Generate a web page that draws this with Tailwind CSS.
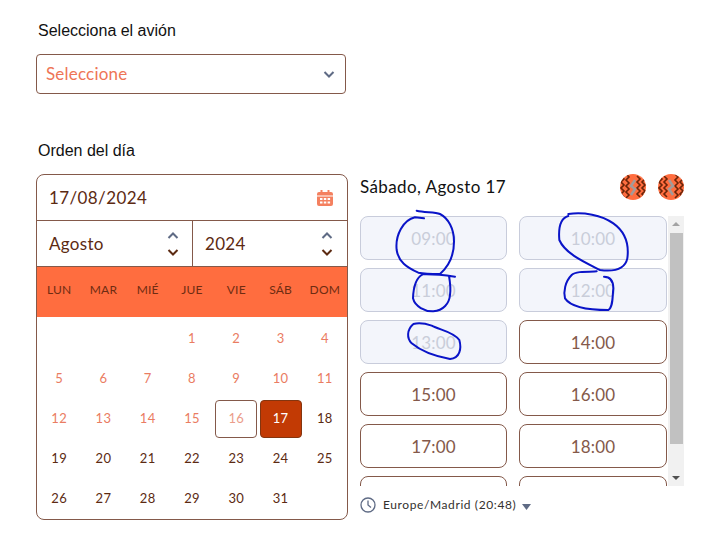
<!DOCTYPE html>
<html lang="es">
<head>
  <meta charset="UTF-8" />
  <title>Orden del día</title>
  <script src="https://cdn.jsdelivr.net/npm/@tailwindcss/browser@4"></script>
</head>
<body class="bg-white">
  <div class="relative w-[717px] h-[560px] overflow-hidden pl-9 pt-[21px] font-['Lato',sans-serif]">
    <label class="block pl-0.5 h-[19px] leading-[19px] text-base text-[#111] font-['Liberation_Sans',sans-serif]">Selecciona el avión</label>

    <div class="mt-3.5 w-[310px] h-10 flex items-center justify-between pl-[9px] pr-[9px] border border-[#84594a] rounded">
      <span class="text-[17px] tracking-[0.2px] text-[#ee7556]">Seleccione</span>
      <svg class="w-3.5 h-3.5" viewBox="0 0 14 14" fill="none" stroke="#5f6b85" stroke-width="2"><path d="M2.500 5 7 9.500 11.500 5"/></svg>
    </div>

    <label class="block mt-[47px] pl-0.5 h-[19px] leading-[19px] text-base text-[#111] font-['Liberation_Sans',sans-serif]">Orden del día</label>

    <div class="mt-[14px] flex items-start">
      <!-- calendario -->
      <div class="w-[312px] h-[346px] border border-[#84594a] rounded-lg overflow-hidden">
        <div class="h-[46px] flex items-center justify-between pl-3 pr-3.5 border-b border-[#84594a]">
          <span class="text-[17px] tracking-[0.4px] text-[#5c2a12]">17/08/2024</span>
          <svg class="w-4 h-4" viewBox="0 0 16 16" fill="#f4805f"><path d="M3.500 0h2v2h5V0h2v2H14a2 2 0 0 1 2 2v1.500H0V4a2 2 0 0 1 2-2h1.500zM0 6.500h16V14a2 2 0 0 1-2 2H2a2 2 0 0 1-2-2z"/><path fill="#fff" d="M3 8h2.500v2H3zM6.800 8h2.500v2H6.800zM10.600 8h2.500v2h-2.500zM3 11.500h2.500v2H3zM6.800 11.500h2.500v2H6.800zM10.600 11.500h2.500v2h-2.500z"/></svg>
        </div>
        <div class="h-[46px] flex border-b border-[#84594a] text-[17px] tracking-[0.3px] text-[#5c2a12]">
          <div class="w-[156px] flex items-center justify-between pl-3 pr-[12px] border-r border-[#84594a]">
            <span>Agosto</span>
            <svg class="w-3.5 h-[26px]" viewBox="0 0 14 26" fill="none" stroke-width="2"><path stroke="#5f6b85" d="M2.500 7 7 2.500 11.500 7"/><path stroke="#5c2a12" d="M2.500 19 7 23.500 11.500 19"/></svg>
          </div>
          <div class="flex-1 flex items-center justify-between pl-3 pr-[13px]">
            <span>2024</span>
            <svg class="w-3.5 h-[26px]" viewBox="0 0 14 26" fill="none" stroke-width="2"><path stroke="#5f6b85" d="M2.500 7 7 2.500 11.500 7"/><path stroke="#5c2a12" d="M2.500 19 7 23.500 11.500 19"/></svg>
          </div>
        </div>
        <div class="h-[50px] pb-[4px] grid grid-cols-7 items-center text-center bg-[#ff6d3f] text-xs tracking-[0.2px] text-[#6e2c12]">
          <span>LUN</span><span>MAR</span><span>MIÉ</span><span>JUE</span><span>VIE</span><span>SÁB</span><span>DOM</span>
        </div>
        <div class="mt-[2px] grid grid-cols-7 auto-rows-[40px] items-center justify-items-center text-[13px] tracking-[0.3px] text-[#5c2a12]">
          <span></span><span></span><span></span>
          <span class="text-[#ea7c62]">1</span><span class="text-[#ea7c62]">2</span><span class="text-[#ea7c62]">3</span><span class="text-[#ea7c62]">4</span>
          <span class="text-[#ea7c62]">5</span><span class="text-[#ea7c62]">6</span><span class="text-[#ea7c62]">7</span><span class="text-[#ea7c62]">8</span><span class="text-[#ea7c62]">9</span><span class="text-[#ea7c62]">10</span><span class="text-[#ea7c62]">11</span>
          <span class="text-[#ea7c62]">12</span><span class="text-[#ea7c62]">13</span><span class="text-[#ea7c62]">14</span><span class="text-[#ea7c62]">15</span>
          <span class="w-[42px] h-[38px] flex items-center justify-center border border-[#84594a] rounded text-[#eb9d8a]">16</span>
          <span class="w-[42px] h-[38px] flex items-center justify-center border border-[#84350f] rounded bg-[#c23a04] text-white">17</span>
          <span>18</span>
          <span>19</span><span>20</span><span>21</span><span>22</span><span>23</span><span>24</span><span>25</span>
          <span>26</span><span>27</span><span>28</span><span>29</span><span>30</span><span>31</span><span></span>
        </div>
      </div>

      <!-- horas -->
      <div class="ml-3 w-[324px]">
        <div class="h-[26px] flex items-center justify-between w-[324px]">
          <span class="text-[17px] tracking-[0.4px] text-[#111]">Sábado, Agosto 17</span>
          <div class="flex gap-3">
            <svg class="w-[26px] h-[26px]" viewBox="0 0 26 26"><clipPath id="c1"><circle cx="13" cy="13" r="13"/></clipPath><g clip-path="url(#c1)"><rect width="26" height="26" fill="#ff6d3f"/><g fill="none" stroke="#6b2408" stroke-width="1.600"><path d="M1 2 4 5 1 8 4 11 1 14 4 17 1 20 4 23"/><path d="M6 0 9 3 6 6 9 9 6 12 9 15 6 18 9 21 6 24"/><path d="M17 2 20 5 17 8 20 11 17 14 20 17 17 20 20 23"/><path d="M22 2 25 5 22 8 25 11 22 14 25 17 22 20 25 23"/></g><path d="M15 6 11 12 15 15 11 21" fill="none" stroke="#a39a98" stroke-width="2.500"/></g></svg>
            <svg class="w-[26px] h-[26px]" viewBox="0 0 26 26"><clipPath id="c2"><circle cx="13" cy="13" r="13"/></clipPath><g clip-path="url(#c2)"><rect width="26" height="26" fill="#ff6d3f"/><g fill="none" stroke="#6b2408" stroke-width="1.600"><path d="M1 2 4 5 1 8 4 11 1 14 4 17 1 20 4 23"/><path d="M6 2 9 5 6 8 9 11 6 14 9 17 6 20 9 23"/><path d="M17 0 20 3 17 6 20 9 17 12 20 15 17 18 20 21 17 24"/><path d="M22 2 25 5 22 8 25 11 22 14 25 17 22 20 25 23"/></g><path d="M11 6 15 12 11 15 15 21" fill="none" stroke="#a39a98" stroke-width="2.500"/></g></svg>
          </div>
        </div>
        <div class="mt-[16px] h-[270px] flex overflow-hidden">
          <div class="w-[308px] grid grid-cols-[147px_148px] gap-x-3 gap-y-2 auto-rows-[44px] text-[17px] tracking-[0.2px] text-center">
            <div class="pt-px flex items-center justify-center border border-[#c8ccdb] rounded-lg bg-[#f3f5fb] text-[#c9cdd9]">09:00</div>
            <div class="pt-px flex items-center justify-center border border-[#c8ccdb] rounded-lg bg-[#f3f5fb] text-[#c9cdd9]">10:00</div>
            <div class="pt-px flex items-center justify-center border border-[#c8ccdb] rounded-lg bg-[#f3f5fb] text-[#c9cdd9]">11:00</div>
            <div class="pt-px flex items-center justify-center border border-[#c8ccdb] rounded-lg bg-[#f3f5fb] text-[#c9cdd9]">12:00</div>
            <div class="pt-px flex items-center justify-center border border-[#c8ccdb] rounded-lg bg-[#f3f5fb] text-[#c9cdd9]">13:00</div>
            <div class="pt-px flex items-center justify-center border border-[#84594a] rounded-lg text-[#84594a]">14:00</div>
            <div class="pt-px flex items-center justify-center border border-[#84594a] rounded-lg text-[#84594a]">15:00</div>
            <div class="pt-px flex items-center justify-center border border-[#84594a] rounded-lg text-[#84594a]">16:00</div>
            <div class="pt-px flex items-center justify-center border border-[#84594a] rounded-lg text-[#84594a]">17:00</div>
            <div class="pt-px flex items-center justify-center border border-[#84594a] rounded-lg text-[#84594a]">18:00</div>
            <div class="border border-[#84594a] rounded-lg"></div>
            <div class="border border-[#84594a] rounded-lg"></div>
          </div>
          <!-- barra de scroll -->
          <div class="w-4 h-[270px] bg-[#f1f1f1] flex flex-col items-center">
            <svg class="w-4 h-[17px]" viewBox="0 0 16 17" fill="#a3a3a3"><path d="M8 6 12 10H4z"/></svg>
            <div class="w-[13px] h-[211px] bg-[#c1c1c1]"></div>
            <div class="flex-1"></div>
            <svg class="w-4 h-[17px]" viewBox="0 0 16 17" fill="#505050"><path d="M8 11 4 7h8z"/></svg>
          </div>
        </div>
        <div class="mt-[10px] flex items-center h-[18px]">
          <svg class="w-4 h-4" viewBox="0 0 16 16" fill="none" stroke="#5f6b85" stroke-width="1.300"><circle cx="8" cy="8" r="7"/><path d="M8 3.500V8l3 2.500"/></svg>
          <span class="ml-[7px] text-xs tracking-[0.6px] text-[#33302e]">Europe/Madrid (20:48)</span>
          <svg class="ml-[6px] mt-[3px] w-[9px] h-[6px]" viewBox="0 0 9 6" fill="#5f6b85"><path d="M0 0h9L4.500 6z"/></svg>
        </div>
      </div>
    </div>

    <!-- garabatos a mano encima de las horas -->
    <svg class="absolute left-[350px] top-[160px] w-[350px] h-[210px] pointer-events-none" viewBox="0 0 1050 630" fill="none" stroke="#0a14c8" stroke-width="6" stroke-linecap="round">
      <path d="M200,152 C225,158 255,155 270,162 C295,175 312,205 312,245 C312,285 295,320 270,342 C245,342 225,342 205,338 C170,322 145,305 140,270 C135,225 160,180 195,172 L222,175"/>
      <path d="M315,350 C280,345 245,342 218,343 C195,355 190,385 189,415 C195,440 225,455 250,454 C280,452 298,430 300,405 C303,385 300,365 297,348"/>
      <path d="M655,168 C630,175 625,205 628,240 C645,280 700,305 750,330 C790,335 825,328 832,295 C838,250 825,215 790,190 C755,165 700,155 655,162"/>
      <path d="M740,334 C700,335 675,335 665,345 C645,365 640,395 645,415 C665,445 720,450 775,450 C790,440 787,410 790,385 C790,365 782,350 762,350"/>
      <path d="M190,492 C170,510 170,535 185,550 C215,575 260,590 300,597 C330,595 335,565 328,540 C310,515 270,510 245,497 C225,490 205,488 190,492"/>
    </svg>
  </div>
</body>
</html>
